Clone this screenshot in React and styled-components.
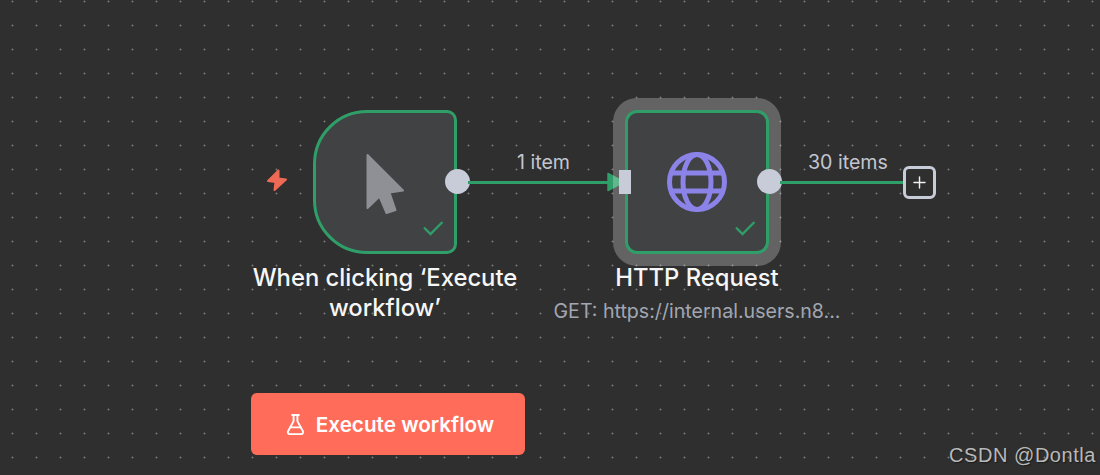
import React from "react";
import styled, { createGlobalStyle } from "styled-components";
import { FlaskConical, Plus } from "lucide-react";

const Global = createGlobalStyle`
  html, body { margin: 0; padding: 0; background: #2e2f2e; }
  body { font-family: Inter, "Liberation Sans", sans-serif; }
`;

const Canvas = styled.main`
  position: relative;
  box-sizing: border-box;
  width: 1100px;
  height: 475px;
  padding: 110px 0 0 251px;
  display: flex;
  flex-direction: column;
  overflow: hidden;
  background-color: #2e2f2e;
  background-image: radial-gradient(circle at 12.5px 12.5px, #767676 0.7px, transparent 1.3px);
  background-size: 24px 24px;
  background-position: 0 -11px;
`;

const DiagramRow = styled.section`
  display: flex;
  align-items: flex-start;
  height: 283px;
`;

const TriggerBolt = styled.svg`
  flex-shrink: 0;
  width: 26px;
  height: 26px;
  margin: 57px 23px 0 13px;
`;

const NodeSlot = styled.article`
  flex: 0 0 144px;
  width: 144px;
  min-width: 0;
  display: flex;
  flex-direction: column;
  align-items: center;
`;

const NodeBox = styled.div`
  position: relative;
  box-sizing: border-box;
  width: 144px;
  height: 144px;
  display: flex;
  align-items: center;
  justify-content: center;
  flex-shrink: 0;
  background: #414244;
  border: 3.5px solid #2f9e69;
  border-radius: ${(p) => (p.$trigger ? "54px 10px 10px 54px" : "12px")};
  box-shadow: ${(p) => (p.$selected ? "0 0 0 12px rgba(255,255,255,0.25)" : "none")};
`;

const NodeIcon = styled.svg`
  width: 60px;
  height: 60px;
  display: block;
  overflow: visible;
`;

const Check = styled.svg`
  position: absolute;
  right: 8px;
  bottom: 13px;
  width: 24px;
  height: 20px;
`;

const OutputHandle = styled.span`
  position: absolute;
  right: -16px;
  top: 56px;
  width: 25px;
  height: 25px;
  border-radius: 50%;
  background: #c8ccd8;
`;

const InputHandle = styled.span`
  position: absolute;
  left: -9.5px;
  top: 56.5px;
  width: 12px;
  height: 24px;
  background: #c8ccd8;
`;

const NodeTitle = styled.h3`
  margin: 9px 0 0;
  width: 290px;
  flex-shrink: 0;
  color: #f6f6f7;
  font-size: 23.8px;
  font-weight: 500;
  line-height: 30px;
  text-align: center;
`;

const NodeSubtitle = styled.p`
  margin: 5px 0 0;
  width: 300px;
  flex-shrink: 0;
  color: #a2a6b1;
  font-size: 19.6px;
  line-height: 26px;
  text-align: center;
`;

const Edge = styled.div`
  position: relative;
  flex: 0 0 ${(p) => p.$width}px;
  box-sizing: border-box;
  padding: 40px 0 0 ${(p) => p.$labelInset}px;
`;

const EdgeLabel = styled.span`
  display: block;
  height: 24px;
  color: #c3c6d0;
  font-size: 19.6px;
  line-height: 24px;
  white-space: nowrap;
`;

const EdgeLine = styled.i`
  display: block;
  height: 3px;
  margin: 6.5px ${(p) => p.$trimEnd}px 0 ${(p) => 11 - p.$labelInset}px;
  background: #2f9e69;
`;

const Arrow = styled.svg`
  position: absolute;
  right: 0;
  top: 62px;
  width: 18px;
  height: 20px;
`;

const AddButton = styled.button`
  flex-shrink: 0;
  box-sizing: border-box;
  width: 33px;
  height: 33px;
  margin-top: 56px;
  padding: 0;
  display: flex;
  align-items: center;
  justify-content: center;
  background: #2e2f2e;
  border: 3px solid #c8ccd8;
  border-radius: 6px;
  color: #f0f0f2;
`;

const RunButton = styled.button`
  width: 274px;
  height: 62px;
  display: flex;
  align-items: center;
  justify-content: center;
  gap: 9px;
  padding: 0 0 0 2px;
  background: #ff6d5a;
  border: none;
  border-radius: 6px;
  color: #fff;
  font-family: inherit;
  font-size: 20.7px;
  font-weight: 600;
`;

const Watermark = styled.span`
  position: absolute;
  right: 4px;
  bottom: 8px;
  color: #b9b9b9;
  font-family: "Liberation Sans", Arial, sans-serif;
  font-size: 20px;
  line-height: 24px;
  letter-spacing: 0.55px;
  text-shadow: 1px 1px 1px #1c1c1c;
`;

const CheckMark = () => (
  <Check viewBox="0 0 24 20" fill="none">
    <path d="M2 9.5 L8.5 16 L20.5 4" stroke="#2f9e69" strokeWidth="2.3" />
  </Check>
);

export default function App() {
  return (
    <Canvas>
      <Global />
      <DiagramRow>
        <TriggerBolt viewBox="0 0 26 26">
          <path
            d="M14.5 3.5 L4 14 L11.5 15 L10.5 23 L22 12.5 L14.5 11.5 Z"
            fill="#ee6a55"
            stroke="#ee6a55"
            strokeWidth="2"
            strokeLinejoin="round"
          />
        </TriggerBolt>

        <NodeSlot>
          <NodeBox $trigger>
            <NodeIcon viewBox="0 0 60 60">
              <path
                d="M24.5 13 L60 48.5 L46.5 50.5 L52.5 68 L43.5 71 L36.5 54.5 L24.5 66 Z"
                transform="translate(-12 -10)"
                fill="#8f9095"
                stroke="#8f9095"
                strokeWidth="2"
                strokeLinejoin="round"
              />
            </NodeIcon>
            <CheckMark />
            <OutputHandle />
          </NodeBox>
          <NodeTitle>When clicking ‘Execute workflow’</NodeTitle>
        </NodeSlot>

        <Edge $width={168} $labelInset={60}>
          <EdgeLabel>1 item</EdgeLabel>
          <EdgeLine $labelInset={60} $trimEnd={13} />
          <Arrow viewBox="0 0 18 20">
            <path d="M1 1.5 L17 10 L1 18.5 Z" fill="#2f9e69" stroke="#2f9e69" strokeWidth="1.5" strokeLinejoin="round" />
          </Arrow>
        </Edge>

        <NodeSlot>
          <NodeBox $selected>
            <InputHandle />
            <NodeIcon viewBox="0 0 60 60" fill="none" stroke="#8b83e8" strokeWidth="5">
              <circle cx="30" cy="30" r="27.5" />
              <ellipse cx="30" cy="30" rx="14" ry="27.5" />
              <path d="M4.5 21 H55.5 M4.5 39 H55.5" />
            </NodeIcon>
            <CheckMark />
            <OutputHandle />
          </NodeBox>
          <NodeTitle>HTTP Request</NodeTitle>
          <NodeSubtitle>GET: https://internal.users.n8...</NodeSubtitle>
        </NodeSlot>

        <Edge $width={134} $labelInset={39}>
          <EdgeLabel>30 items</EdgeLabel>
          <EdgeLine $labelInset={39} $trimEnd={0} />
        </Edge>

        <AddButton aria-label="Add node">
          <Plus size={19} strokeWidth={1.8} />
        </AddButton>
      </DiagramRow>

      <RunButton>
        <FlaskConical size={23} strokeWidth={2} />
        Execute workflow
      </RunButton>

      <Watermark>CSDN @Dontla</Watermark>
    </Canvas>
  );
}
